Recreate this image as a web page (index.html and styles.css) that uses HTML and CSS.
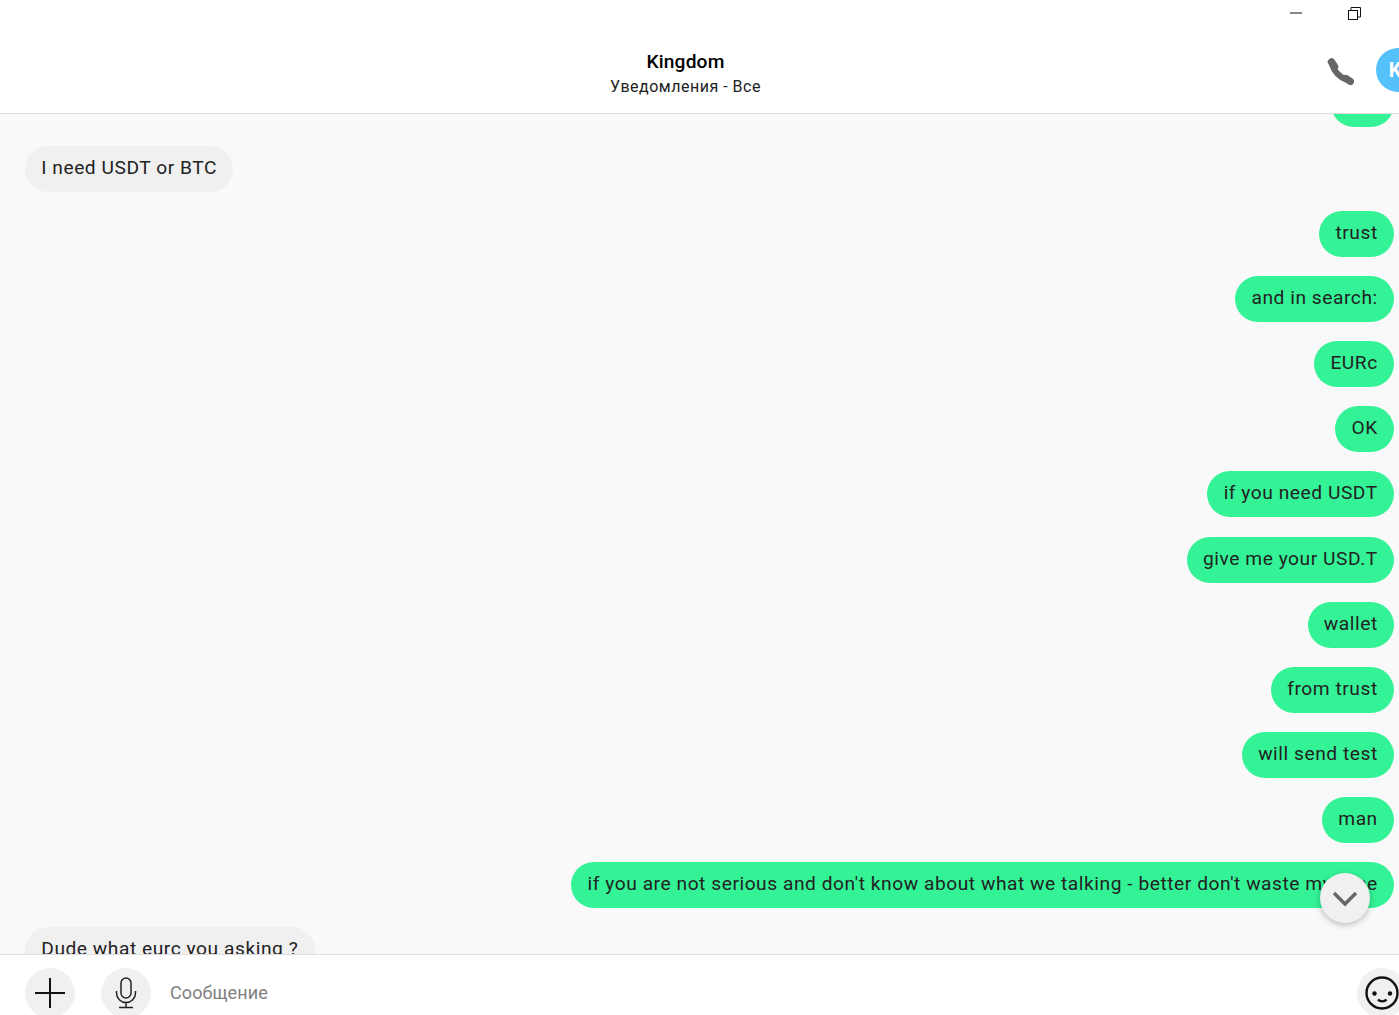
FILE: index.html
```html
<!DOCTYPE html>
<html lang="en">
<head>
    <meta charset="UTF-8">
    <meta name="viewport" content="width=device-width, initial-scale=1.0">
    <title>Kingdom</title>
    <link rel="stylesheet" href="styles.css">
</head>
<body>
    <header>
        <div class="window-controls">
            <svg class="win-min" width="12" height="2" viewBox="0 0 12 2"><path d="M0 1H12" stroke="#111" stroke-width="1" fill="none"/></svg>
            <svg class="win-restore" width="13" height="13" viewBox="0 0 13 13" fill="none" stroke="#111" stroke-width="1"><rect x="0.5" y="3.5" width="9" height="9"/><path d="M3 3V0.5H12.5V10H9.5"/></svg>
        </div>
        <div class="chat-bar">
            <div class="chat-title">
                <div class="chat-name">Kingdom</div>
                <div class="chat-sub">Уведомления - Все</div>
            </div>
            <svg class="call-icon" width="27" height="27" viewBox="0 0 27 27" fill="none" stroke="#666" stroke-linecap="round"><path d="M4.500 4 7.500 8.500" stroke-width="7.500"/><path d="M5.500 7.500C7 13 12.500 19 19 21.500" stroke-width="6"/><path d="M19 20.500 23.500 23.500" stroke-width="7"/></svg>
            <div class="avatar">K</div>
        </div>
    </header>

    <main class="chat-container">
        <div class="messages">
            <div class="message mine">yes</div>
            <div class="message other">I need USDT or BTC</div>
            <div class="message mine">trust</div>
            <div class="message mine">and in search:</div>
            <div class="message mine">EURc</div>
            <div class="message mine">OK</div>
            <div class="message mine">if you need USDT</div>
            <div class="message mine">give me your USD.T</div>
            <div class="message mine">wallet</div>
            <div class="message mine">from trust</div>
            <div class="message mine">will send test</div>
            <div class="message mine">man</div>
            <div class="message mine">if you are not serious and don't know about what we talking - better don't waste my time</div>
            <div class="message other">Dude what eurc you asking ?</div>
        </div>
        <button class="scroll-down">
            <svg width="26" height="16" viewBox="0 0 26 16" fill="none" stroke="#666" stroke-width="3.500"><path d="M2 2 13 13 24 2"/></svg>
        </button>
    </main>

    <footer>
        <button class="round-btn">
            <svg width="32" height="32" viewBox="0 0 32 32" stroke="#111" stroke-width="2" fill="none"><path d="M16 1V31M1 16H31"/></svg>
        </button>
        <button class="round-btn">
            <svg width="22" height="32" viewBox="0 0 22 32" stroke="#222" stroke-width="1.5" fill="none"><rect x="6" y="1" width="10" height="20" rx="5"/><path d="M1.500 14V16A9.500 9.500 0 0 0 20.500 16V14M11 25.500V30.500M4 30.500H18"/></svg>
        </button>
        <div class="message-input">Сообщение</div>
        <button class="round-btn smile-btn">
            <svg width="34" height="34" viewBox="0 0 34 34" fill="none" stroke="#111" stroke-width="2.400"><circle cx="17" cy="17" r="15.500"/><circle cx="9.500" cy="17.500" r="2.200" fill="#111" stroke="none"/><circle cx="25" cy="17.500" r="2.200" fill="#111" stroke="none"/><path d="M13 23.500C15 26 19.500 26 21.500 23.500"/></svg>
        </button>
    </footer>
</body>
</html>
```

FILE: styles.css
```css
html, body {
    height: 100%;
}

body {
    font-family: Roboto, "Liberation Sans", sans-serif;
    margin: 0;
    padding: 0;
    display: flex;
    flex-direction: column;
    height: 100vh;
    overflow: hidden;
    background-color: #ffffff;
    color: #111111;
}

button {
    border: none;
    padding: 0;
    cursor: pointer;
}

header {
    flex: none;
    height: 113px;
    border-bottom: 1px solid #dedede;
    overflow: hidden;
}

.window-controls {
    display: flex;
    align-items: center;
    height: 26px;
    padding-left: 1290px;
}

.win-min {
    margin-right: 46px;
}

.chat-bar {
    display: flex;
    align-items: center;
    width: 1420px;
    height: 87px;
    padding-left: 44px;
    box-sizing: border-box;
}

.chat-title {
    flex: 1;
    text-align: center;
    margin-top: 8px;
}

.chat-name {
    font-size: 19.200px;
    font-weight: 500;
    letter-spacing: 0.150px;
    line-height: 25px;
    color: #000;
}

.chat-sub {
    font-size: 16px;
    line-height: 25px;
    letter-spacing: 0.5px;
    color: #222;
}

.call-icon {
    margin-right: 22px;
    margin-top: 3px;
}

.avatar {
    width: 44px;
    height: 44px;
    margin-top: 1px;
    border-radius: 50%;
    background-color: #55c1fb;
    color: #fff;
    font-size: 20px;
    font-weight: 700;
    line-height: 44px;
    text-align: center;
    text-indent: -6px;
}

.chat-container {
    position: relative;
    flex: 1;
    overflow: hidden;
    background-color: #f9f9f9;
}

.messages {
    display: flex;
    flex-direction: column;
    gap: 19.080px;
    margin-top: -33px;
    padding: 0 5px 0 25px;
}

.message {
    flex: none;
    height: 46px;
    padding: 0 16.250px;
    border-radius: 23px;
    box-sizing: border-box;
    font-size: 19.200px;
    line-height: 44.500px;
    letter-spacing: 0.540px;
    color: #222;
    white-space: nowrap;
}

.message.mine {
    background-color: #33f396;
    align-self: flex-end;
}

.message.other {
    background-color: #f0f0f0;
    align-self: flex-start;
}

.scroll-down {
    position: absolute;
    left: 1320px;
    top: 759px;
    width: 50px;
    height: 50px;
    padding-top: 2px;
    border-radius: 50%;
    background-color: #f0f0f0;
    box-shadow: 0 2px 6px rgba(0, 0, 0, 0.25);
    display: flex;
    align-items: center;
    justify-content: center;
}

footer {
    flex: none;
    display: flex;
    height: 61px;
    border-top: 1px solid #dedede;
    padding: 13px 0 0 25px;
    box-sizing: border-box;
    overflow: hidden;
    background-color: #fff;
}

.round-btn {
    flex: none;
    width: 50px;
    height: 50px;
    border-radius: 50%;
    background-color: #f0f0f0;
    display: flex;
    align-items: center;
    justify-content: center;
    margin-right: 26px;
}

.message-input {
    flex: none;
    width: 1187px;
    margin-left: -7px;
    font-size: 18px;
    line-height: 50px;
    letter-spacing: 0.100px;
    color: #808080;
}

.smile-btn {
    margin-right: 0;
}
```
